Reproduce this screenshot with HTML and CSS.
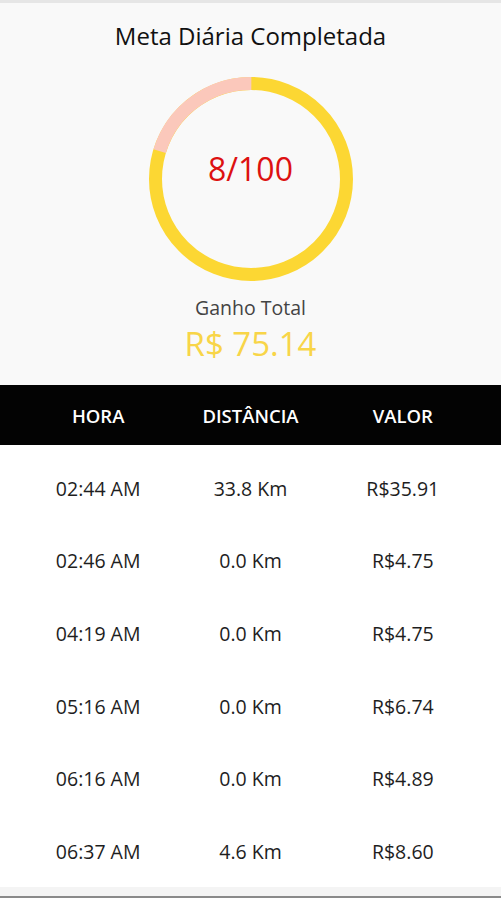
FILE: index.html
```html
<!DOCTYPE html>
<html lang="pt-BR">
<head>
    <meta charset="UTF-8">
    <meta name="viewport" content="width=device-width, initial-scale=1.0">
    <title>Meta Diária</title>
    <link rel="stylesheet" href="styles.css">
</head>
<body>
    <div class="top-bar"></div>

    <div class="summary">
        <h1>Meta Diária Completada</h1>

        <div class="ring">
            <svg viewBox="0 0 204 204" width="204" height="204">
                <circle class="ring-track" cx="102" cy="102" r="95.5"></circle>
                <!-- parte restante da meta -->
                <circle class="ring-rest" cx="102" cy="102" r="95.5"
                        stroke-dasharray="121.7 600" transform="rotate(197 102 102)"></circle>
            </svg>
            <div class="ring-label">8/100</div>
        </div>

        <p class="total-label">Ganho Total</p>
        <p class="total-value">R$ 75.14</p>
    </div>

    <div class="table-head">
        <div class="col">HORA</div>
        <div class="col">DISTÂNCIA</div>
        <div class="col">VALOR</div>
    </div>

    <div class="rows">
        <div class="row">
            <div class="col">02:44 AM</div>
            <div class="col">33.8 Km</div>
            <div class="col">R$35.91</div>
        </div>
        <div class="row">
            <div class="col">02:46 AM</div>
            <div class="col">0.0 Km</div>
            <div class="col">R$4.75</div>
        </div>
        <div class="row">
            <div class="col">04:19 AM</div>
            <div class="col">0.0 Km</div>
            <div class="col">R$4.75</div>
        </div>
        <div class="row">
            <div class="col">05:16 AM</div>
            <div class="col">0.0 Km</div>
            <div class="col">R$6.74</div>
        </div>
        <div class="row">
            <div class="col">06:16 AM</div>
            <div class="col">0.0 Km</div>
            <div class="col">R$4.89</div>
        </div>
        <div class="row">
            <div class="col">06:37 AM</div>
            <div class="col">4.6 Km</div>
            <div class="col">R$8.60</div>
        </div>
    </div>

    <div class="bottom-bar"></div>
</body>
</html>
```

FILE: styles.css
```css
* {
    box-sizing: border-box;
    margin: 0;
    padding: 0;
}

body {
    font-family: 'Open Sans', 'Noto Sans', sans-serif;
    background-color: #ffffff;
    width: 501px;
    height: 900px;
    overflow: hidden;
}

.top-bar {
    height: 3px;
    background-color: #e6e6e6;
}

.summary {
    background-color: #f9f9f9;
    padding: 18px 0 21px;
    display: flex;
    flex-direction: column;
    align-items: center;
}

h1 {
    font-size: 24px;
    font-weight: 400;
    line-height: 30px;
    color: #111;
}

.ring {
    position: relative;
    width: 204px;
    height: 204px;
    margin-top: 26px;
}

.ring svg {
    display: block;
}

.ring-track,
.ring-rest {
    fill: none;
    stroke-width: 13;
}

.ring-track {
    stroke: #fcd733;
}

.ring-rest {
    stroke: #fbc8bb;
}

.ring-label {
    position: absolute;
    top: 72px;
    left: 0;
    right: 0;
    text-align: center;
    font-size: 32px;
    line-height: 40px;
    color: #dd1111;
}

.total-label {
    margin-top: 15px;
    font-size: 19.5px;
    line-height: 24px;
    color: #444;
}

.total-value {
    margin-top: 4px;
    font-size: 33px;
    line-height: 40px;
    color: #f8d548;
}

.table-head {
    height: 60px;
    background-color: #030303;
    display: grid;
    grid-template-columns: repeat(3, 1fr);
    align-items: center;
    padding: 0 22px;
    color: #fff;
    font-size: 18.5px;
    font-weight: 600;
}

.col {
    text-align: center;
}

.rows {
    padding-top: 7px;
    height: 442px;
}

.row {
    height: 72.6px;
    display: grid;
    grid-template-columns: repeat(3, 1fr);
    align-items: center;
    padding: 0 22px;
    font-size: 19.5px;
    color: #1e1e1e;
}

.bottom-bar {
    height: 11px;
    background-color: #f4f4f4;
    border-bottom: 2px solid #8a8a8a;
}
```
